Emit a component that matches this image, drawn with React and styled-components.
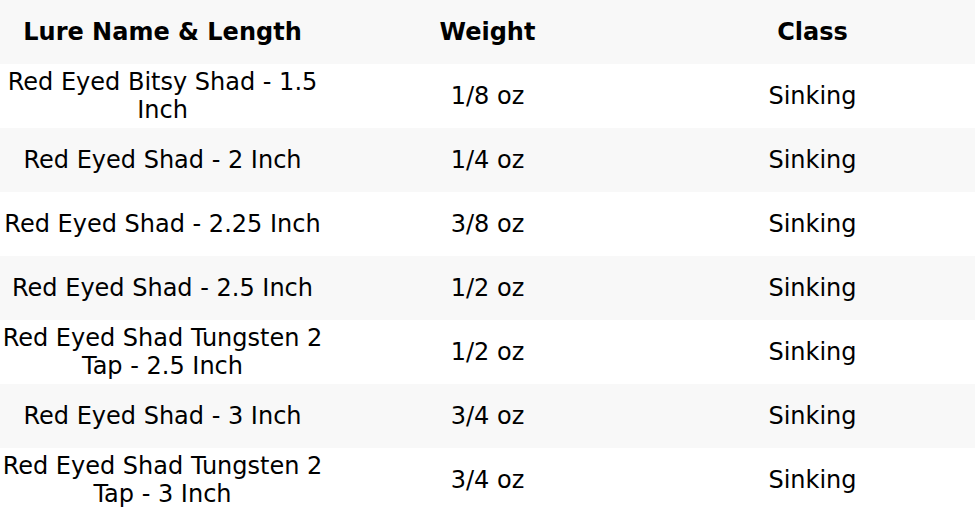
import styled, { createGlobalStyle } from 'styled-components'

const GlobalStyle = createGlobalStyle`
  html, body { margin: 0; padding: 0; background: #ffffff; }
  body { font-family: 'DejaVu Sans', sans-serif; color: #000000; }
`

const Table = styled.table`
  width: 975px;
  border-collapse: collapse;
  table-layout: fixed;
  font-family: 'DejaVu Sans', sans-serif;
  font-size: 24px;
`

const Row = styled.tr`
  height: 64px;
  background: ${({ $shaded }) => ($shaded ? '#f8f8f8' : '#ffffff')};
`

const HeadCell = styled.th`
  padding: 0 2px;
  font-weight: 700;
  text-align: center;
  vertical-align: middle;
`

const Cell = styled.td`
  padding: 0 2px;
  text-align: center;
  vertical-align: middle;
  line-height: normal;
`

const LURES = [
  { name: 'Red Eyed Bitsy Shad - 1.5 Inch', weight: '1/8 oz', cls: 'Sinking' },
  { name: 'Red Eyed Shad - 2 Inch', weight: '1/4 oz', cls: 'Sinking' },
  { name: 'Red Eyed Shad - 2.25 Inch', weight: '3/8 oz', cls: 'Sinking' },
  { name: 'Red Eyed Shad - 2.5 Inch', weight: '1/2 oz', cls: 'Sinking' },
  { name: 'Red Eyed Shad Tungsten 2 Tap - 2.5 Inch', weight: '1/2 oz', cls: 'Sinking' },
  { name: 'Red Eyed Shad - 3 Inch', weight: '3/4 oz', cls: 'Sinking' },
  { name: 'Red Eyed Shad Tungsten 2 Tap - 3 Inch', weight: '3/4 oz', cls: 'Sinking' },
]

export default function App() {
  return (
    <>
      <GlobalStyle />
      <Table>
        <thead>
          <Row $shaded>
            <HeadCell>Lure Name &amp; Length</HeadCell>
            <HeadCell>Weight</HeadCell>
            <HeadCell>Class</HeadCell>
          </Row>
        </thead>
        <tbody>
          {LURES.map((l, i) => (
            <Row key={i} $shaded={i % 2 === 1}>
              <Cell>{l.name}</Cell>
              <Cell>{l.weight}</Cell>
              <Cell>{l.cls}</Cell>
            </Row>
          ))}
        </tbody>
      </Table>
    </>
  )
}
